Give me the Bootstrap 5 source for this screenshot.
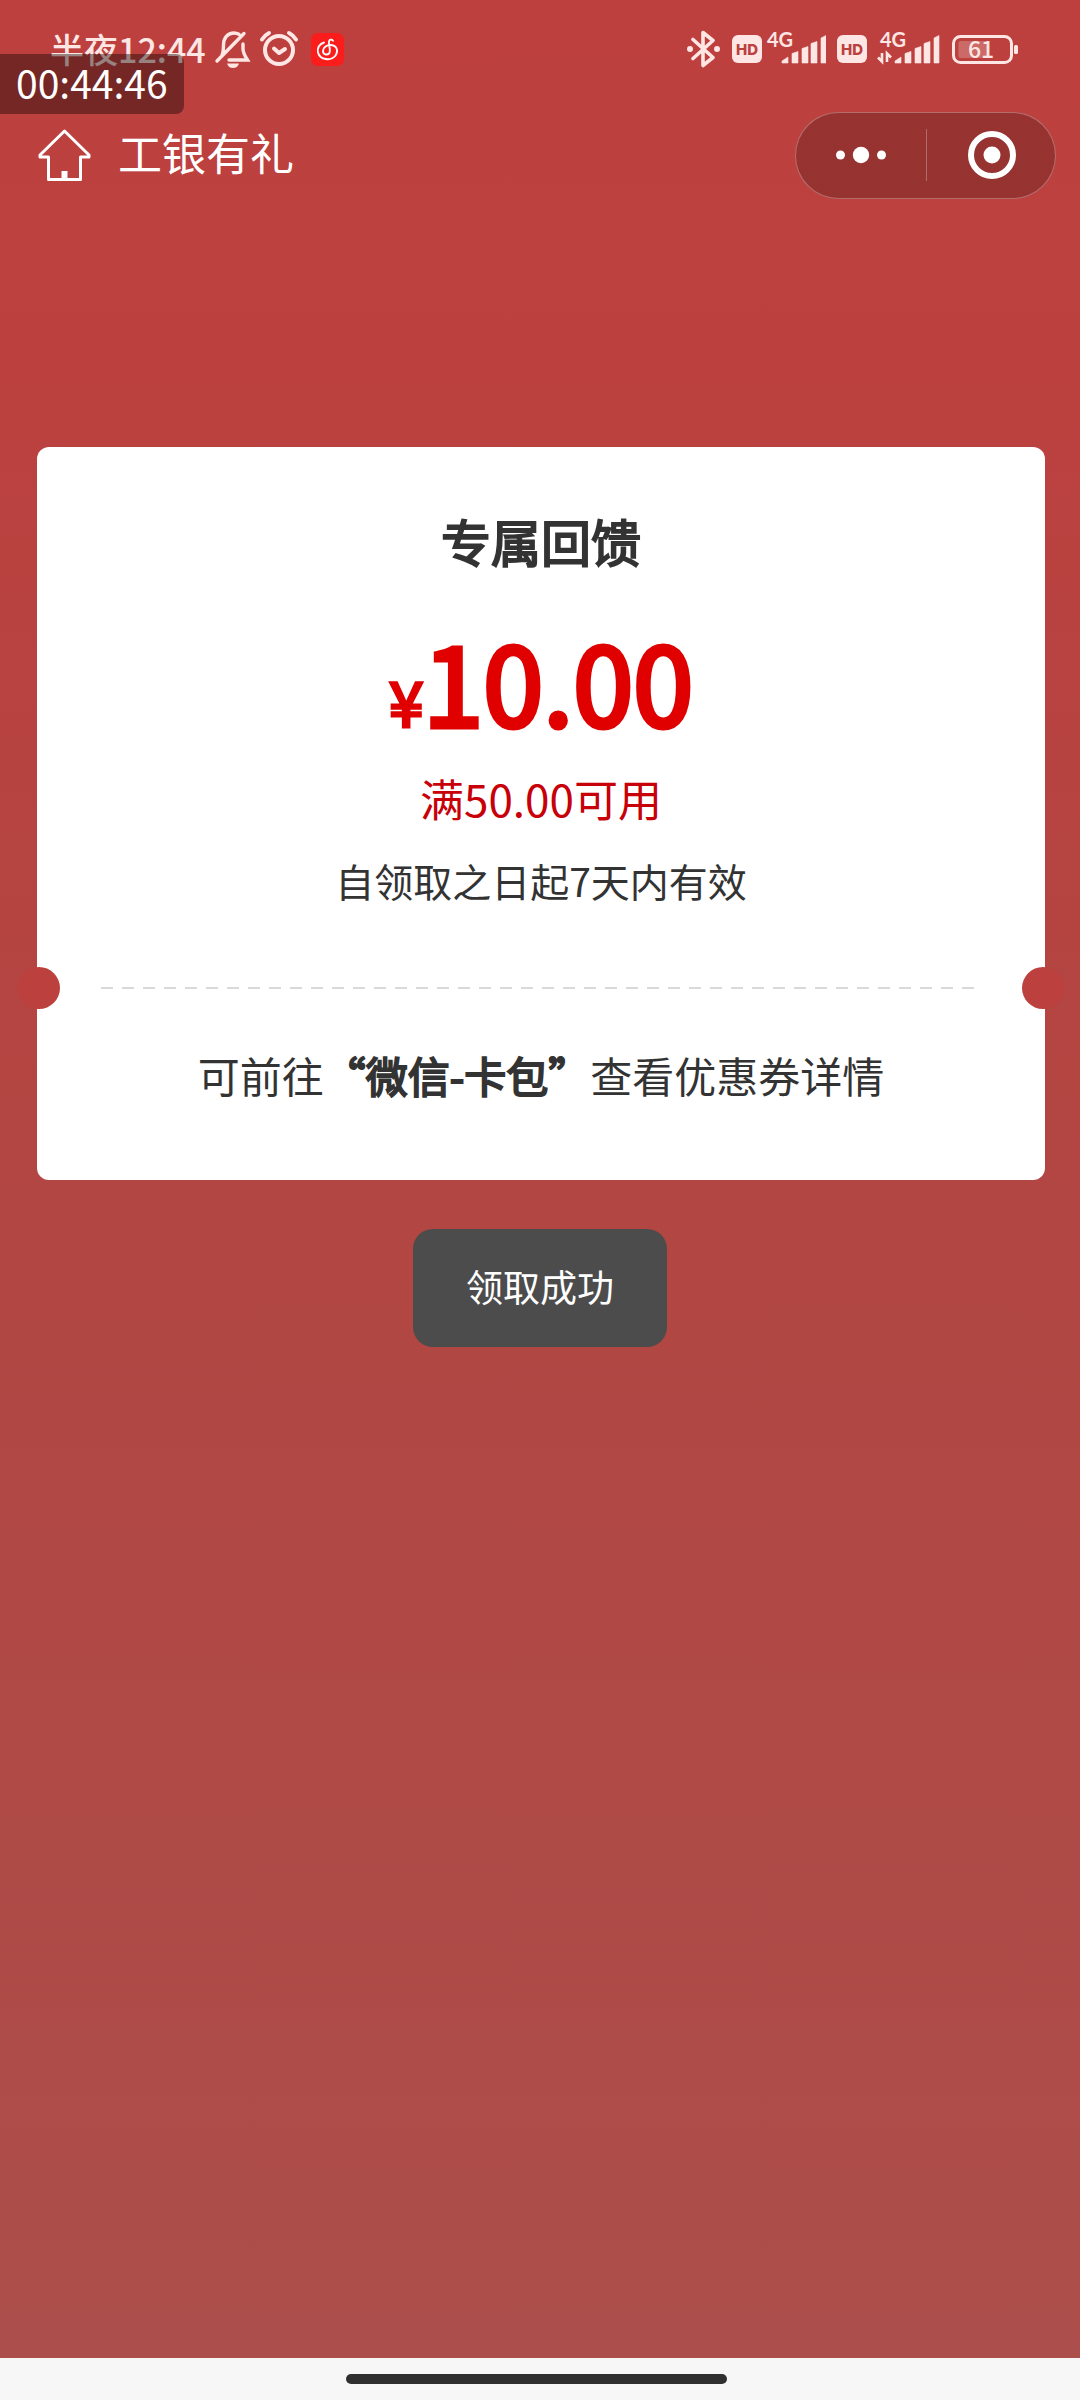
<!DOCTYPE html>
<html lang="zh-CN">
<head>
<meta charset="utf-8">
<meta name="viewport" content="width=device-width, initial-scale=1">
<title>工银有礼</title>
<link href="https://cdn.jsdelivr.net/npm/bootstrap@5.3.0/dist/css/bootstrap.min.css" rel="stylesheet">
<style>
  body {
    font-family: "Noto Sans CJK SC", sans-serif;
    color: #333;
    background: #f7f7f7;
  }
  .gift-page {
    background: linear-gradient(#bd403e 0, #bb413f 400px, #b24642 1200px, #ac4e4b 100%);
  }
  .status-bar {
    height: 98px;
    padding: 0 62px 0 50px;
    color: #fde6e4;
    fill: currentColor;
  }
  .status-group { gap: 8px; }
  .signal-group { gap: 11px; }
  .status-time { font-size: 34px; line-height: 40px; font-weight: 500; }
  .rec-timer {
    top: 54px;
    left: 0;
    height: 60px;
    padding: 0 16px;
    border-radius: 0 8px 8px 0;
    background: rgba(28, 8, 6, .45);
    color: #fff;
    font-size: 39px;
    line-height: 56px;
  }
  .title-bar { height: 114px; padding: 0 24px 0 38px; }
  .title-home { gap: 27px; }
  .title-name { font-size: 44px; line-height: 60px; padding-bottom: 6px; }
  .capsule {
    width: 261px;
    height: 87px;
    border: 1px solid rgba(255, 255, 255, .28);
    border-radius: 44px;
    background: rgba(0, 0, 0, .2);
  }
  .capsule-rule { width: 1px; height: 52px; background: rgba(255, 255, 255, .28); }
  .coupon {
    margin: 235px 35px 0 37px;
    padding: 63px 0 75px;
    border: 0;
    border-radius: 12px;
  }
  .coupon-title { font-size: 50px; line-height: 60px; margin: 0 0 50px; font-weight: 400; -webkit-text-stroke: 2px currentColor; }
  .coupon-amount { font-size: 108px; line-height: 120px; margin: 0 0 28px; color: #e00000; -webkit-text-stroke: 5px currentColor; }
  .coupon-yen { font-size: 62px; line-height: 1; -webkit-text-stroke: 3px currentColor; }
  .coupon-limit { font-size: 44px; line-height: 60px; margin: 0 0 22px; color: #c70009; }
  .coupon-term { font-size: 39px; line-height: 60px; margin: 0 0 57px; }
  .coupon-tip { font-size: 42px; line-height: 60px; margin: 36px 0 0; }
  .coupon-tip b { font-weight: 400; -webkit-text-stroke: 2px currentColor; }
  .tear-row { margin: 0 -19px; }
  .notch { width: 42px; height: 42px; background: #bc403d; }
  .tear-line {
    height: 2px;
    margin: 0 47px 0 41px;
    background: repeating-linear-gradient(90deg, #d9d9d9 0 12px, transparent 12px 21px);
  }
  .toast-note {
    margin: 49px 0 0;
    padding: 30px 53px 34px;
    border-radius: 20px;
    background: #4c4c4c;
    color: #fff;
    font-size: 37px;
    line-height: 54px;
  }
  .gesture-area { height: 42px; padding-right: 8px; }
  .gesture-pill { width: 381px; height: 10px; background: #303030; }
</style>
</head>
<body>
<div class="d-flex flex-column min-vh-100 position-relative">
  <div class="gift-page flex-grow-1 d-flex flex-column">
    <div class="status-bar d-flex align-items-center justify-content-between">
      <div class="status-group d-flex align-items-center">
        <span class="status-time">半夜12:44</span>
        <svg width="37" height="38" viewBox="0 0 37 38" fill="none" stroke="currentColor" stroke-width="3.4" stroke-linecap="round" aria-label="静音">
          <path d="M3 31L30 3.500M8 25c1.500-3 1.500-6 1.500-10C9.500 8 13.500 3 20 3c2 0 3.500.5 5 1.300M29 14v5c0 4 2 7 4.500 11H15"/>
          <path d="M13 33.500h12q-1.500 4.500-6 4.500t-6-4.500z" fill="currentColor" stroke="none"/>
        </svg>
        <svg width="44" height="38" viewBox="0 0 44 38" fill="none" stroke="currentColor" stroke-width="4" stroke-linecap="round" stroke-linejoin="round" aria-label="闹钟">
          <circle cx="20" cy="20" r="14"/>
          <path d="M3 9.500q3-4.500 7-6.500M30 3q4 2 7 6.500M15 18.500l5 4.500 6-4"/>
        </svg>
        <svg width="33" height="33" viewBox="0 0 33 33" aria-label="音乐">
          <rect width="33" height="33" rx="7" fill="#fb1d1b"/>
          <path d="M13 9.500C8 11 6 15.500 7 19.500c2 7.500 13 9 17.500 3C28 17 25 12 19.500 12c-4 0-7.500 2.500-7.500 6 0 3.500 4 4.500 6 2.500 1.500-1.500 1-4 .4-7-.7-3.500-1-6.300 1-6.800 1-.2 2 .2 2.600 1" fill="none" stroke="#fff" stroke-width="1.900" stroke-linecap="round"/>
        </svg>
      </div>
      <div class="signal-group d-flex align-items-center">
        <svg width="35" height="38" viewBox="0 0 35 38" aria-label="蓝牙">
          <path d="M7 9.500l20 18L17 35.500V2.500l10 8-20 18" fill="none" stroke="currentColor" stroke-width="3.600" stroke-linecap="round" stroke-linejoin="round"/>
          <circle cx="4" cy="19" r="3"/><circle cx="31" cy="19" r="3"/>
        </svg>
        <svg width="94" height="54" viewBox="0 -8 94 54" aria-label="卡一信号">
          <rect y="5" width="30" height="28" rx="6"/>
          <text x="15" y="24.500" text-anchor="middle" font-family="Inter, sans-serif" font-size="15" font-weight="800" fill="#bb403e">HD</text>
          <text x="35" y="17" font-family="Lato, sans-serif" font-size="20" font-weight="700">4G</text>
          <path d="M50 33v-2l6-4v6zM60 33V23.500l6-2V33zM70 33V18.500l6-2V33zM79 33V13.500l6-2V33zM89 33V8l5-2.500V33z" stroke="currentColor" stroke-width=".6" stroke-linejoin="round"/>
        </svg>
        <svg width="103" height="54" viewBox="0 -8 103 54" aria-label="卡二信号">
          <rect y="5" width="30" height="28" rx="6"/>
          <text x="15" y="24.500" text-anchor="middle" font-family="Inter, sans-serif" font-size="15" font-weight="800" fill="#bb403e">HD</text>
          <text x="43" y="17" font-family="Lato, sans-serif" font-size="20" font-weight="700">4G</text>
          <path d="M41 27.500l4 4V23M50 32v-8.500l4 4" fill="none" stroke="currentColor" stroke-width="2.600"/>
          <path d="M58 33v-2l6-4v6zM68 33V23.500l6-2V33zM78 33V18.500l6-2V33zM87 33V13.500l6-2V33zM97 33V8l5-2.500V33z" stroke="currentColor" stroke-width=".6" stroke-linejoin="round"/>
        </svg>
        <svg width="67" height="38" viewBox="0 0 67 38" aria-label="电量">
          <rect x="2.500" y="6.500" width="58" height="26" rx="7" fill="none" stroke="currentColor" stroke-width="3"/>
          <rect x="7.500" y="11" width="29" height="17" rx="2" opacity=".25"/>
          <rect x="63" y="15" width="4" height="9" rx="1.500"/>
          <text x="30" y="28" text-anchor="middle" font-family="Noto Sans CJK SC, sans-serif" font-size="23" font-weight="500">61</text>
        </svg>
      </div>
    </div>

    <header class="title-bar d-flex align-items-center justify-content-between text-white">
      <div class="title-home d-flex align-items-center">
        <a href="#" class="text-white d-flex" aria-label="首页">
          <svg width="53" height="52" viewBox="0 0 53 52" fill="none" stroke="currentColor" stroke-width="3" stroke-linejoin="round">
            <path d="M26.500 2L2 26v2h8.500v22.500h32V28H51v-2z"/>
            <path d="M23.500 42h6v8h-6z" fill="currentColor" stroke="none"/>
          </svg>
        </a>
        <span class="title-name">工银有礼</span>
      </div>
      <div class="capsule d-flex align-items-center">
        <button type="button" class="btn border-0 p-0 flex-fill d-flex justify-content-center" aria-label="更多">
          <svg width="52" height="18" viewBox="0 0 52 18" fill="#fff"><circle cx="5.500" cy="9" r="4.500"/><circle cx="26" cy="9" r="8.200"/><circle cx="46.500" cy="9" r="4.500"/></svg>
        </button>
        <span class="capsule-rule"></span>
        <button type="button" class="btn border-0 p-0 flex-fill d-flex justify-content-center" aria-label="关闭">
          <svg width="50" height="50" viewBox="0 0 50 50"><circle cx="26" cy="25" r="21" fill="none" stroke="#fff" stroke-width="6"/><circle cx="26" cy="25" r="8.500" fill="#fff"/></svg>
        </button>
      </div>
    </header>

    <main class="flex-grow-1 d-flex flex-column">
      <section class="card coupon text-center">
        <h1 class="coupon-title">专属回馈</h1>
        <p class="coupon-amount"><span class="coupon-yen">¥</span>10.00</p>
        <p class="coupon-limit">满50.00可用</p>
        <p class="coupon-term">自领取之日起7天内有效</p>
        <div class="tear-row d-flex align-items-center">
          <span class="notch rounded-circle"></span>
          <span class="tear-line flex-fill"></span>
          <span class="notch rounded-circle"></span>
        </div>
        <p class="coupon-tip">可前往<b>“微信-卡包”</b>查看优惠券详情</p>
      </section>
      <div class="toast-note align-self-center" role="status">领取成功</div>
    </main>
  </div>
  <div class="gesture-area d-flex align-items-center justify-content-center">
    <span class="gesture-pill rounded-pill"></span>
  </div>
  <div class="rec-timer position-absolute">00:44:46</div>
</div>
<script src="https://cdn.jsdelivr.net/npm/bootstrap@5.3.0/dist/js/bootstrap.bundle.min.js"></script>
</body>
</html>
